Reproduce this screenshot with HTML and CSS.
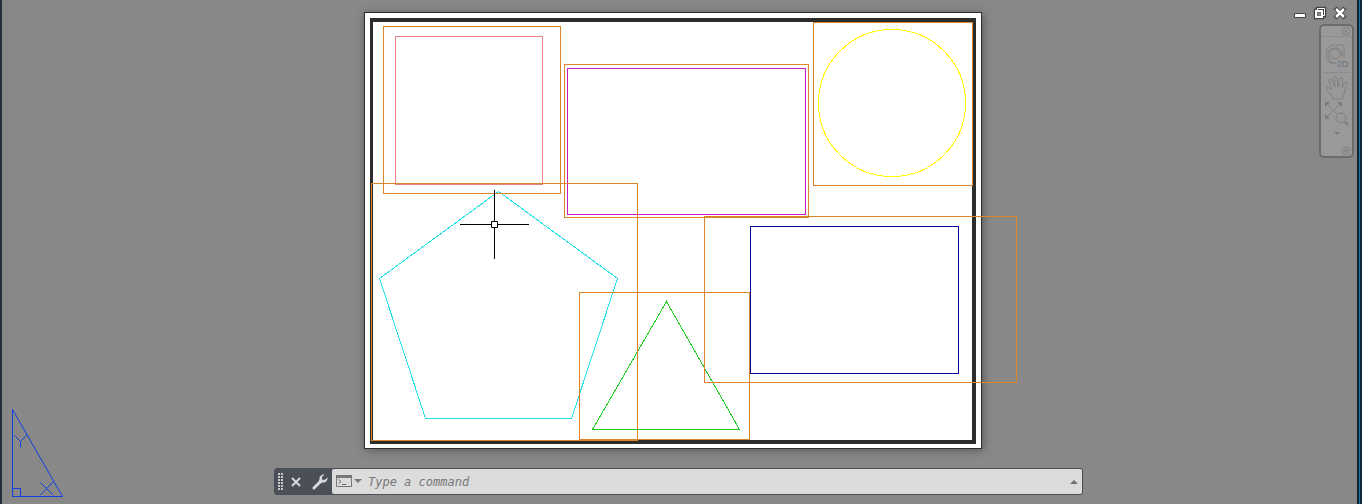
FILE: index.html
```html
<!DOCTYPE html>
<html lang="en">
<head>
    <meta charset="UTF-8">
    <meta name="viewport" content="width=device-width, initial-scale=1.0">
    <title>Drawing Layout</title>
    <link rel="stylesheet" href="styles.css">
</head>
<body>
    <main class="workspace">
        <aside class="ucs">
            <svg class="ucs-icon" width="54" height="92" viewBox="10 407 54 92" role="img" aria-label="Coordinate system icon">
                <path d="M12.500 409.500V496.500H62.500ZM12.500 488.500H20.500V496.500M14.500 435.500L20.500 441.500L27 435M20.500 441.500V447.500M40.500 482.500L53 495M53.500 481.500L40.500 495" />
            </svg>
        </aside>

        <section class="center">
            <svg class="drawing" viewBox="274 0 809 460" role="img" aria-label="Layout sheet with viewports">
                <!-- sheet -->
                <rect class="sheet-shadow" x="365" y="14" width="618" height="436" />
                <rect class="sheet" x="364.500" y="12.500" width="617" height="436" />
                <path class="frame" d="M370 18H976V444H370ZM373 22V440H972V22Z" />

                <!-- shapes -->
                <rect class="shape salmon" x="395.500" y="36.500" width="147" height="148" />
                <rect class="shape magenta" x="567.500" y="68.500" width="238" height="146" />
                <circle class="shape yellow" cx="892" cy="103" r="73.500" />
                <path class="shape cyan" d="M498.500 191.500L617.500 278.500L571.500 418.500H425.500L379.500 278.500Z" />
                <path class="shape green" d="M666.500 301.500L739.500 429.500H592.500Z" />
                <rect class="shape blue" x="750.500" y="226.500" width="208" height="147" />

                <!-- viewports -->
                <rect class="shape viewport" x="383.500" y="26.500" width="177" height="167" />
                <rect class="shape viewport" x="564.500" y="64.500" width="244" height="153" />
                <rect class="shape viewport" x="813.500" y="22.500" width="159" height="163" />
                <rect class="shape viewport" x="371.500" y="183.500" width="266" height="257" />
                <rect class="shape viewport" x="579.500" y="292.500" width="170" height="147" />
                <rect class="shape viewport" x="704.500" y="216.500" width="312" height="166" />

                <!-- crosshair -->
                <path class="crosshair" d="M494.500 190V221M494.500 228V259M460 224.500H491M498 224.500H529M491.500 221.500H497.500V227.500H491.500Z" />
            </svg>

            <form class="command-bar">
                <svg class="grip" width="5" height="17" viewBox="0 0 5 17">
                    <path d="M1 0V17M4 0V17" />
                </svg>
                <button class="bar-button" type="button" aria-label="Close">
                    <svg width="10" height="10" viewBox="0 0 10 10"><path d="M1 1L9 9M9 1L1 9" fill="none" stroke="#d6d8db" stroke-width="2" /></svg>
                </button>
                <button class="bar-button" type="button" aria-label="Customize">
                    <svg width="16" height="16" viewBox="0 0 16 16">
                        <path d="M2 14L9 7" fill="none" stroke="#d6d8db" stroke-width="3" stroke-linecap="round" />
                        <path d="M12.500 0.500C9.500 0 7 2.500 7.500 5.500L6.500 7.500L8.500 9.500L10.500 8.500C13.500 9 16 6.500 15.500 3.500L12.500 6L10 5.500V3Z" fill="#d6d8db" />
                    </svg>
                </button>
                <div class="command-field">
                    <button class="recent" type="button" aria-label="Recent commands">
                        <svg width="26" height="13" viewBox="0 0 26 13">
                            <path d="M0.500 0.500H15.500V11.500H0.500Z" fill="none" stroke="#777" />
                            <path d="M0 0H16V3H0ZM18 4H26L22 8Z" fill="#777" />
                            <path d="M2.500 4.500L5 6.500L2.500 8.500M6 9.500H10" fill="none" stroke="#666" />
                        </svg>
                    </button>
                    <input class="command-input" type="text" placeholder="Type a command" aria-label="Command">
                    <button class="history" type="button" aria-label="Command history">
                        <svg width="8" height="4" viewBox="0 0 8 4"><path d="M0 4L4 0L8 4Z" fill="#707070" /></svg>
                    </button>
                </div>
            </form>
        </section>

        <aside class="tools">
            <div class="window-controls">
                <button type="button" aria-label="Minimize">
                    <svg width="14" height="14" viewBox="0 0 14 14"><path d="M1.500 7.500H12.500V11.500H1.500Z" fill="#fff" stroke="#444" /></svg>
                </button>
                <button type="button" aria-label="Restore">
                    <svg width="14" height="14" viewBox="0 0 14 14">
                        <path d="M4.500 4V2.500H11.500V9.500H10M2.500 4.500H9.500V11.500H2.500Z" fill="none" stroke="#444" stroke-width="3.500" />
                        <path d="M4.500 4V2.500H11.500V9.500H10" fill="none" stroke="#fff" />
                        <path d="M3 5H9V11H3Z" fill="none" stroke="#fff" stroke-width="2" />
                    </svg>
                </button>
                <button type="button" aria-label="Close">
                    <svg width="14" height="14" viewBox="0 0 14 14">
                        <path d="M2 2L12 12M12 2L2 12" fill="none" stroke="#444" stroke-width="4.500" />
                        <path d="M3 3L11 11M11 3L3 11" fill="none" stroke="#fff" stroke-width="2.500" />
                    </svg>
                </button>
            </div>
            <nav class="nav-bar" aria-label="Navigation bar">
                <button class="nav-close" type="button" aria-label="Close navigation bar">
                    <svg width="10" height="10" viewBox="0 0 10 10"><circle cx="5" cy="5" r="4" /><path d="M3 3L7 7M7 3L3 7" /></svg>
                </button>
                <button class="nav-wheel" type="button" aria-label="2D wheel">
                    <svg width="26" height="26" viewBox="0 0 26 26">
                        <path d="M12 20H7Q2 19 2 11Q2 2 11 2H18Q20 2 20 5V14" />
                        <circle cx="11" cy="11" r="5" />
                        <path d="M12 20Q4 20 4 12Q4 5 11 5Q18 5 18 12V14" />
                        <text class="wheel-text" x="13" y="24">2D</text>
                    </svg>
                </button>
                <button class="nav-pan" type="button" aria-label="Pan">
                    <svg width="26" height="26" viewBox="0 0 26 26">
                        <path d="M9 24Q8 20 3 15Q1 12 4 12L8 15L5 6Q5 3 8 5L11 12L10 3Q11 0 13 3L14 12L16 3Q18 1 19 4L18 13L21 7Q24 5 23 9L20 19L18 24Z" />
                    </svg>
                </button>
                <button class="nav-zoom" type="button" aria-label="Zoom extents">
                    <svg width="26" height="26" viewBox="0 0 26 26">
                        <path d="M2 2L13 13M17 2L2 17" />
                        <path class="solid" d="M1 1H6L1 6ZM18 1V6L13 1ZM1 18V13L6 18Z" />
                        <circle cx="17" cy="17" r="5" /><path d="M21 21L24 24" stroke-width="3" />
                    </svg>
                </button>
                <button class="nav-more" type="button" aria-label="Zoom options">
                    <svg width="6" height="4" viewBox="0 0 6 4"><path class="solid" d="M0 0H6L3 3Z" /></svg>
                </button>
                <button class="nav-menu" type="button" aria-label="Navigation bar options">
                    <svg width="10" height="10" viewBox="0 0 10 10"><circle cx="5" cy="5" r="4" /><path d="M3 4H7L5 7Z" /></svg>
                </button>
            </nav>
        </aside>
    </main>
</body>
</html>
```
FILE: styles.css
```css
* {
    box-sizing: border-box;
}
body {
    margin: 0;
    font-family: "Liberation Sans", Arial, sans-serif;
}
button {
    display: flex;
    align-items: center;
    justify-content: center;
    padding: 0;
    border: none;
    background: none;
    cursor: pointer;
}
.workspace {
    display: grid;
    grid-template-columns: 272px minmax(0, 1fr) 274px;
    min-height: 100vh;
    padding-right: 5px;
    border-left: 2px solid #252d3a;
    background: linear-gradient(to right, #14202c 2px, #1a78a6 2px 3px, #10283a 3px) right / 5px 100% no-repeat #888;
}
.ucs {
    display: flex;
    align-items: flex-end;
    padding: 0 8px 5px;
}
.ucs-icon {
    fill: none;
    stroke: #1040e0;
}

/* Drawing area */
.drawing {
    display: block;
    width: 100%;
}
.sheet-shadow {
    fill: #555;
    filter: blur(5px);
}
.sheet {
    fill: #fff;
    stroke: #2c2c2c;
}
.frame {
    fill: #2c2c2c;
    fill-rule: evenodd;
}
.shape {
    fill: none;
    shape-rendering: crispEdges;
}
.viewport {
    stroke: #dc8428;
}
.salmon {
    stroke: #e88484;
}
.magenta {
    stroke: #c41cc4;
}
.yellow {
    stroke: #ffff00;
}
.cyan {
    stroke: #22dfe8;
}
.green {
    stroke: #22cc22;
}
.blue {
    stroke: #0808a0;
}
.crosshair {
    fill: none;
    stroke: #000;
}

/* Command line */
.command-bar {
    display: flex;
    align-items: center;
    height: 27px;
    margin-top: 8px;
    border: 1px solid #4b4f58;
    border-radius: 3px;
    background-color: #4b4f58;
}
.grip {
    margin: 0 1px 0 3px;
    fill: none;
    stroke: #c8cace;
    stroke-width: 2;
    stroke-dasharray: 2 1;
}
.bar-button {
    width: 24px;
    height: 25px;
}
.bar-button:hover {
    background-color: #60656f;
}
.command-field {
    display: flex;
    flex: 1;
    align-items: center;
    align-self: stretch;
    min-width: 0;
    padding: 0 4px;
    border-radius: 2px;
    background-color: #dcdcdc;
}
.command-input {
    flex: 1;
    min-width: 0;
    padding: 0 6px;
    border: none;
    outline: none;
    background: none;
    color: #333;
    font-family: "DejaVu Sans Mono", monospace;
    font-size: 12px;
    font-style: italic;
}
.command-input::placeholder {
    color: #777;
}

/* Right side tools */
.tools {
    display: flex;
    flex-direction: column;
    align-items: flex-end;
    padding: 6px 3px;
}
.window-controls {
    display: flex;
    gap: 6px;
    padding-right: 7px;
}
.nav-bar {
    display: flex;
    flex-direction: column;
    align-items: center;
    width: 35px;
    height: 134px;
    margin-top: 4px;
    border: 2px solid #6c6c6c;
    border-radius: 5px;
    background-color: #999;
}
.nav-bar svg {
    fill: none;
    stroke: #818181;
}
.nav-bar .solid {
    fill: #7c7c7c;
    stroke: none;
}
.nav-close {
    align-self: stretch;
    justify-content: flex-end;
    padding-right: 1px;
    border-bottom: 1px solid #8e8e8e;
}
.nav-wheel {
    margin-top: 6px;
}
.nav-pan {
    margin-top: 3px;
    padding-top: 2px;
    border-top: 1px solid #8b8b8b;
}
.nav-more {
    margin-top: 5px;
}
.nav-menu {
    align-self: flex-end;
    margin-top: auto;
    padding-right: 1px;
}
.wheel-text {
    fill: #73808a;
    stroke: none;
    font-size: 9px;
    font-weight: bold;
}
```
